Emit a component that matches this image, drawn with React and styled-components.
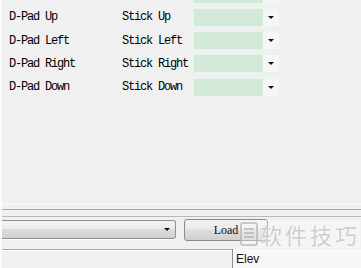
import React from "react";
import styled, { createGlobalStyle } from "styled-components";

const GlobalStyle = createGlobalStyle`
  html, body {
    margin: 0;
    padding: 0;
    background: #f0f0f0;
  }
`;

const Page = styled.div`
  position: relative;
  width: 361px;
  height: 268px;
  overflow: hidden;
  background: #f0f0f0;
  display: flex;
  flex-direction: column;
  border-left: 2px solid #fbfbfb;
  box-sizing: border-box;
`;

const MappingList = styled.div`
  display: flex;
  flex-direction: column;
  gap: 3.3px;
  margin-top: -16px;
  padding-left: 7px;
`;

const Row = styled.div`
  display: flex;
  align-items: center;
  height: 20px;
`;

const Label = styled.span`
  width: ${({ $w }) => $w}px;
  font-family: "Liberation Mono", "DejaVu Sans Mono", monospace;
  font-size: 12px;
  letter-spacing: -1.2px;
  color: #000;
  white-space: nowrap;
`;

const GreenCombo = styled.div`
  display: flex;
  width: 87px;
  height: 19px;
  margin-left: -2px;
  box-sizing: border-box;
  border: 1px solid #e9f4ec;
  background: #d2e9d8;
`;

const GreenField = styled.div`
  flex: 1;
`;

const ArrowButton = styled.div`
  width: 16px;
  display: flex;
  align-items: center;
  justify-content: center;
  background: ${({ $light }) => ($light ? "#f6f6f6" : "transparent")};
`;

const Arrow = styled.span`
  width: 0;
  height: 0;
  border-left: 3px solid transparent;
  border-right: 3px solid transparent;
  border-top: 3px solid #111;
`;

const Spacer = styled.div`
  flex: 1;
`;

const Rule = styled.div`
  height: 1px;
  background: ${({ $c }) => $c};
  margin-bottom: ${({ $mb }) => $mb}px;
`;

const Toolbar = styled.div`
  display: flex;
  align-items: flex-start;
  gap: 8px;
  margin-left: -2px;
`;

const SelectBox = styled.div`
  width: 176px;
  height: 19px;
  box-sizing: border-box;
  border: 1px solid #8f8f8f;
  border-left: none;
  border-radius: 0 3px 3px 0;
  background: linear-gradient(#f3f3f3, #ebebeb 45%, #dcdcdc 50%, #cfcfcf);
  display: flex;
  justify-content: flex-end;
  align-items: center;
  padding-right: 5px;
  box-shadow: 0 1px 0 #fff;
`;

const LoadButton = styled.button`
  width: 84px;
  height: 22px;
  box-sizing: border-box;
  border: 1px solid #8a8a8a;
  border-radius: 3px;
  background: linear-gradient(#f2f2f2, #ebebeb 45%, #dddddd 50%, #cfcfcf);
  font-family: "Liberation Serif", "DejaVu Serif", serif;
  font-size: 12px;
  color: #111;
  padding: 0;
  margin-top: -1px;
`;

const BottomBar = styled.div`
  display: flex;
  height: 19px;
  margin-top: 8px;
  margin-left: -2px;
`;

const TabStrip = styled.div`
  width: 232px;
  border-top: 1px solid #a7a7a7;
  box-shadow: inset 0 1px 0 #ffffff;
`;

const Tab = styled.div`
  flex: 1;
  border-left: 1px solid #8c8c8c;
  background: #f7f7f7;
  padding: 3px 0 0 3px;
  font-family: "Liberation Sans", Arial, sans-serif;
  font-size: 12px;
  color: #111;
`;

const Watermark = styled.div`
  position: absolute;
  left: 238px;
  top: 220px;
  display: flex;
  align-items: center;
  gap: 2px;
  white-space: nowrap;
  background: rgba(255, 255, 255, 0.35);
`;

const WatermarkText = styled.span`
  font-family: "Noto Sans CJK SC", sans-serif;
  font-size: 22px;
  line-height: 28px;
  color: rgba(190, 190, 190, 0.75);
  text-shadow: 0 0 2px #fff;
  letter-spacing: 3px;
  white-space: nowrap;
`;

const mappings = [
  ["D-Pad Up", "Stick Up"],
  ["D-Pad Left", "Stick Left"],
  ["D-Pad Right", "Stick Right"],
  ["D-Pad Down", "Stick Down"],
];

function Combo() {
  return (
    <GreenCombo>
      <GreenField />
      <ArrowButton $light>
        <Arrow />
      </ArrowButton>
    </GreenCombo>
  );
}

export default function App() {
  return (
    <>
      <GlobalStyle />
      <Page>
        <MappingList>
          <Row>
            <Label $w={113} />
            <Label $w={73} />
            <Combo />
          </Row>
          {mappings.map(([pad, stick]) => (
            <Row key={pad}>
              <Label $w={113}>{pad}</Label>
              <Label $w={73}>{stick}</Label>
              <Combo />
            </Row>
          ))}
        </MappingList>
        <Spacer />
        <Rule $c="#fafafa" $mb={4} />
        <Rule $c="#a9a9a9" $mb={6} />
        <Rule $c="#b9b9b9" $mb={3} />
        <Toolbar>
          <SelectBox>
            <Arrow />
          </SelectBox>
          <LoadButton>Load</LoadButton>
        </Toolbar>
        <BottomBar>
          <TabStrip />
          <Tab>Elev</Tab>
        </BottomBar>
        <Watermark>
          <svg width="18" height="26" viewBox="0 0 18 26">
            <rect x="1" y="2" width="16" height="22" rx="2" fill="none" stroke="rgba(170,170,170,0.6)" strokeWidth="2" />
            <path d="M4 8h10M4 12h10M4 16h10" stroke="rgba(170,170,170,0.6)" strokeWidth="2" />
          </svg>
          <WatermarkText>软件技巧</WatermarkText>
        </Watermark>
      </Page>
    </>
  );
}
